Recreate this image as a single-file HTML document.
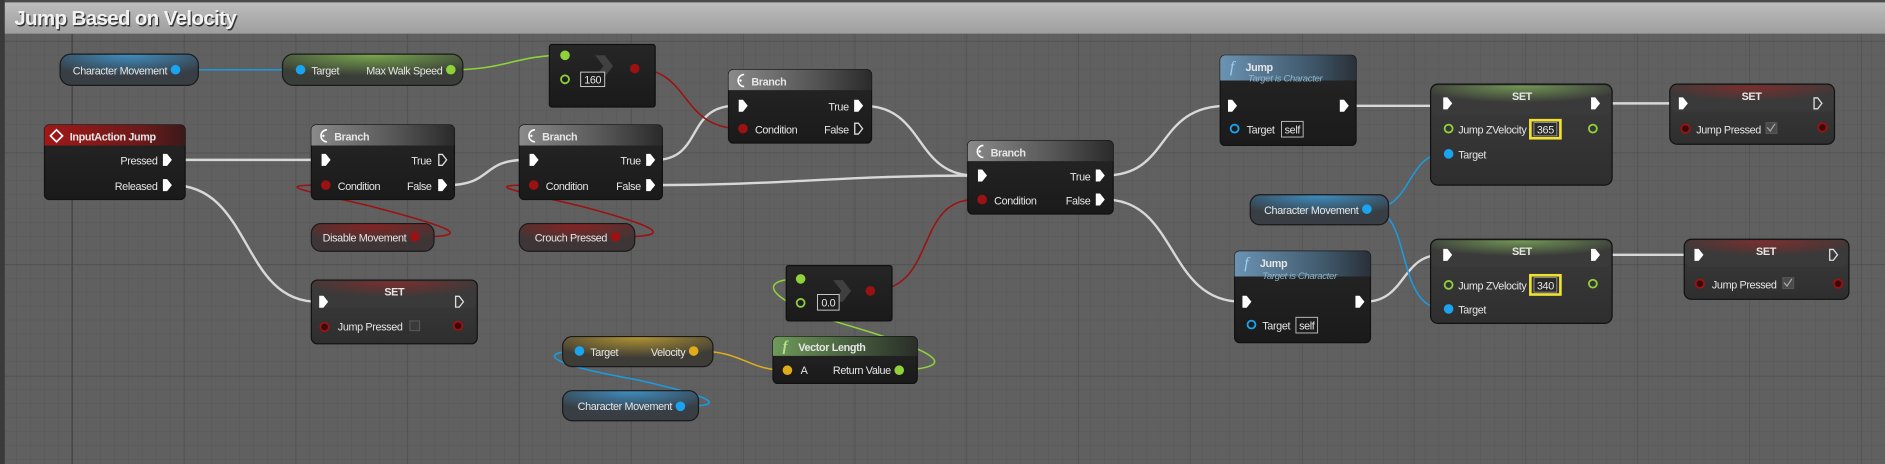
<!DOCTYPE html>
<html><head><meta charset="utf-8"><style>
html,body{margin:0;padding:0;background:#5e5e5e;overflow:hidden}
svg{display:block}
text{font-family:"Liberation Sans Narrow","Liberation Sans",sans-serif;font-size:9px;letter-spacing:-0.3px;fill:#e6e6e6}
.b{font-weight:bold}
.e{text-anchor:end}
.m{text-anchor:middle}
</style></head><body>
<svg width="1885" height="464" viewBox="0 0 1568 386" preserveAspectRatio="none" xmlns="http://www.w3.org/2000/svg">
<defs>
<pattern id="minor" width="11.6" height="11.6" patternUnits="userSpaceOnUse" x="60" y="34">
<path d="M0 0H11.6M0 0V11.6" stroke="#585858" stroke-width="0.8" fill="none"/>
</pattern>
<pattern id="major" width="93" height="93" patternUnits="userSpaceOnUse" x="60" y="34">
<path d="M0 0H93M0 0V93" stroke="#4d4d4d" stroke-width="1" fill="none"/>
</pattern>
<linearGradient id="title" x1="0" y1="0" x2="0" y2="1"><stop offset="0" stop-color="#bdbdbd"/><stop offset="1" stop-color="#9e9e9e"/></linearGradient>
<linearGradient id="hGrey" x1="0" y1="0" x2="1" y2="0"><stop offset="0" stop-color="#8a8a8a"/><stop offset="0.6" stop-color="#555"/><stop offset="1" stop-color="#2a2a2a"/></linearGradient>
<linearGradient id="hRed" x1="0" y1="0" x2="1" y2="0"><stop offset="0" stop-color="#a01818"/><stop offset="0.7" stop-color="#6a1a1a"/><stop offset="1" stop-color="#3a1a1a"/></linearGradient>
<linearGradient id="hBlue" x1="0" y1="0" x2="1" y2="0"><stop offset="0" stop-color="#6b93b3"/><stop offset="0.7" stop-color="#3d5466"/><stop offset="1" stop-color="#2a3038"/></linearGradient>
<linearGradient id="hGreen" x1="0" y1="0" x2="1" y2="0"><stop offset="0" stop-color="#6e9a5a"/><stop offset="0.7" stop-color="#3c4d36"/><stop offset="1" stop-color="#2a2e28"/></linearGradient>
<radialGradient id="setG" cx="0.5" cy="0" r="0.6"><stop offset="0" stop-color="#7da95a"/><stop offset="1" stop-color="#3a3a3a"/></radialGradient>
<radialGradient id="setR" cx="0.5" cy="0" r="0.6"><stop offset="0" stop-color="#8c2a2a"/><stop offset="1" stop-color="#3a3a3a"/></radialGradient>
<radialGradient id="pBlue" cx="0.5" cy="0" r="0.7"><stop offset="0" stop-color="#3e8fc4"/><stop offset="1" stop-color="#383e44"/></radialGradient>
<radialGradient id="pGreen" cx="0.5" cy="0" r="0.7"><stop offset="0" stop-color="#7aa84e"/><stop offset="1" stop-color="#3a3e38"/></radialGradient>
<radialGradient id="pRed" cx="0.5" cy="0" r="0.7"><stop offset="0" stop-color="#8a2222"/><stop offset="1" stop-color="#3e3636"/></radialGradient>
<radialGradient id="pOr" cx="0.5" cy="0" r="0.7"><stop offset="0" stop-color="#b39433"/><stop offset="1" stop-color="#3e3c36"/></radialGradient>
<linearGradient id="body" x1="0" y1="0" x2="0" y2="1"><stop offset="0" stop-color="#262626"/><stop offset="1" stop-color="#1a1a1a"/></linearGradient>
<linearGradient id="body2" x1="0" y1="0" x2="0" y2="1"><stop offset="0" stop-color="#3c3c3c"/><stop offset="1" stop-color="#2e2e2e"/></linearGradient>
<path id="ex" d="M-3.5,-5 h3.5 l4,5 l-4,5 h-3.5 z"/>
<path id="exo" d="M-3,-4.5 h3 l3.5,4.5 l-3.5,4.5 h-3 z" fill="none" stroke="#ddd" stroke-width="1.1"/>
</defs>
<rect width="1568" height="386" fill="#606060"/>
<rect width="1568" height="386" fill="url(#minor)"/>
<rect width="1568" height="386" fill="url(#major)"/>
<line x1="60" y1="28" x2="60" y2="386" stroke="#454545" stroke-width="1.2"/>
<rect x="0" y="0" width="4" height="386" fill="#3a3a3a"/>
<rect x="4" y="0" width="1564" height="2" fill="#4a4a4a"/>
<rect x="4" y="2" width="1564" height="26" fill="url(#title)"/>
<text x="13" y="22" class="b" style="font-family:'Liberation Sans',sans-serif;font-size:17px;letter-spacing:-0.5px;fill:#333">Jump Based on Velocity</text>
<text x="12" y="21" class="b" style="font-family:'Liberation Sans',sans-serif;font-size:17px;letter-spacing:-0.5px;fill:#f2f2f2">Jump Based on Velocity</text>

<!-- wires -->
<g fill="none" stroke-width="2" stroke="#d8d8d8">
<path d="M143,133 H264"/>
<path d="M143,154 C210,154 200,251 264,251"/>
<path d="M372,154 C410,154 400,133 437,133"/>
<path d="M545,133 C585,133 570,88 612,88"/>
<path d="M545,154 C650,154 700,146 811,146"/>
<path d="M718,88 C770,88 760,146 811,146"/>
<path d="M919,146 C975,146 960,88 1021,88"/>
<path d="M919,166 C980,166 970,251 1033,251"/>
<path d="M1122,88 H1199"/>
<path d="M1332,86 H1396"/>
<path d="M1135,251 C1170,251 1165,212 1199,212"/>
<path d="M1332,212 H1408"/>
</g>
<g fill="none" stroke-width="1.3" stroke="#9c1212">
<path d="M528,57 C575,57 565,107 616,107"/>
<path d="M724,242 C780,242 760,166 811,166"/>
<path d="M347,197 C400,197 370,188 310,172 C260,160 225,154 264,154"/>
<path d="M515,197 C565,197 545,188 485,172 C435,160 400,154 437,154"/>
</g>
<g fill="none" stroke-width="1.3" stroke="#1a9be0">
<path d="M148,58 H248"/>
<path d="M1140,174 C1175,174 1170,128 1201,128"/>
<path d="M1140,174 C1175,174 1160,257 1201,257"/>
<path d="M567,338 C620,338 570,325 530,316 C440,300 455,292 482,292"/>
</g>
<g fill="none" stroke-width="1.3" stroke="#8fd13b">
<path d="M377,58 C420,58 430,46 468,46"/>
<path d="M750,308 C805,305 770,290 710,272 C640,252 625,232 666,232"/>
</g>
<path d="M579,292 C620,292 620,308 655,308" fill="none" stroke="#e0ad1a" stroke-width="1.3"/>

<!-- pill: Character Movement top -->
<rect x="50" y="45" width="115" height="26" rx="9" fill="url(#pBlue)" stroke="#1a1a1a"/>
<text x="139" y="62" class="e">Character Movement</text>
<circle cx="146" cy="58" r="4" fill="#1aa3ef"/>
<!-- Target / Max walk speed -->
<rect x="235" y="45" width="150" height="26" rx="9" fill="url(#pGreen)" stroke="#1a1a1a"/>
<circle cx="250" cy="58" r="4" fill="#1aa3ef"/><text x="259" y="62">Target</text>
<text x="368" y="62" class="e">Max Walk Speed</text><circle cx="375" cy="58" r="4" fill="#8fd13b"/>
<!-- compare 1 -->
<rect x="457" y="37" width="88" height="52" rx="2" fill="url(#body)" stroke="#111"/>
<circle cx="470" cy="46" r="4" fill="#8fd13b"/>
<circle cx="470" cy="66" r="3.3" fill="none" stroke="#8fd13b" stroke-width="1.5"/>
<path d="M495,46 l8,0 l7,9 l-7,9 l-8,0 l7,-9z" fill="#555" opacity="0.6"/>
<rect x="483" y="60" width="20" height="12" fill="#1e1e1e" stroke="#ccc" stroke-width="0.8"/><text x="493" y="69.5" class="m">160</text>
<circle cx="528" cy="57" r="4" fill="#9c1212"/>

<!-- InputAction Jump -->
<rect x="37" y="104" width="117" height="62" rx="4" fill="url(#body)" stroke="#111"/>
<path d="M41,104 h109 a4,4 0 0 1 4,4 v13 h-117 v-13 a4,4 0 0 1 4,-4z" fill="url(#hRed)"/>
<path d="M47,108 l5,5 l-5,5 l-5,-5z" fill="none" stroke="#fff" stroke-width="1.4"/>
<text x="58" y="117" class="b">InputAction Jump</text>
<text x="131" y="137" class="e">Pressed</text><use href="#ex" x="139" y="133" fill="#fff"/>
<text x="131" y="158" class="e">Released</text><use href="#ex" x="139" y="154" fill="#fff"/>

<g transform="translate(259,104)">
<rect x="0" y="0" width="119" height="62" rx="4" fill="url(#body)" stroke="#111"/>
<path d="M4,0 h111 a4,4 0 0 1 4,4 v13 h-119 v-13 a4,4 0 0 1 4,-4z" fill="url(#hGrey)"/>
<path d="M13,4 a5,5 0 0 0 0,10" fill="none" stroke="#fff" stroke-width="1.3"/><circle cx="10" cy="9" r="1" fill="#fff"/>
<text x="19" y="13" class="b">Branch</text>
<use href="#ex" x="12" y="29" fill="#fff"/>
<circle cx="12" cy="50" r="4" fill="#9c1212"/><text x="22" y="54">Condition</text>
<text x="100" y="33" class="e">True</text><use href="#exo" x="109" y="29"/>
<text x="100" y="54" class="e">False</text><use href="#ex" x="109" y="50" fill="#fff"/>
</g>

<g transform="translate(432,104)">
<rect x="0" y="0" width="119" height="62" rx="4" fill="url(#body)" stroke="#111"/>
<path d="M4,0 h111 a4,4 0 0 1 4,4 v13 h-119 v-13 a4,4 0 0 1 4,-4z" fill="url(#hGrey)"/>
<path d="M13,4 a5,5 0 0 0 0,10" fill="none" stroke="#fff" stroke-width="1.3"/><circle cx="10" cy="9" r="1" fill="#fff"/>
<text x="19" y="13" class="b">Branch</text>
<use href="#ex" x="12" y="29" fill="#fff"/>
<circle cx="12" cy="50" r="4" fill="#9c1212"/><text x="22" y="54">Condition</text>
<text x="101" y="33" class="e">True</text><use href="#ex" x="109" y="29" fill="#fff"/>
<text x="101" y="54" class="e">False</text><use href="#ex" x="109" y="50" fill="#fff"/>
</g>

<g transform="translate(606,58)">
<rect x="0" y="0" width="119" height="61" rx="4" fill="url(#body)" stroke="#111"/>
<path d="M4,0 h111 a4,4 0 0 1 4,4 v13 h-119 v-13 a4,4 0 0 1 4,-4z" fill="url(#hGrey)"/>
<path d="M13,4 a5,5 0 0 0 0,10" fill="none" stroke="#fff" stroke-width="1.3"/><circle cx="10" cy="9" r="1" fill="#fff"/>
<text x="19" y="13" class="b">Branch</text>
<use href="#ex" x="12" y="30" fill="#fff"/>
<circle cx="12" cy="49" r="4" fill="#9c1212"/><text x="22" y="53">Condition</text>
<text x="100" y="34" class="e">True</text><use href="#ex" x="108" y="30" fill="#fff"/>
<text x="100" y="53" class="e">False</text><use href="#exo" x="108" y="49"/>
</g>

<g transform="translate(805,117)">
<rect x="0" y="0" width="121" height="61" rx="4" fill="url(#body)" stroke="#111"/>
<path d="M4,0 h113 a4,4 0 0 1 4,4 v13 h-121 v-13 a4,4 0 0 1 4,-4z" fill="url(#hGrey)"/>
<path d="M13,4 a5,5 0 0 0 0,10" fill="none" stroke="#fff" stroke-width="1.3"/><circle cx="10" cy="9" r="1" fill="#fff"/>
<text x="19" y="13" class="b">Branch</text>
<use href="#ex" x="12" y="29" fill="#fff"/>
<circle cx="12" cy="49" r="4" fill="#9c1212"/><text x="22" y="53">Condition</text>
<text x="102" y="33" class="e">True</text><use href="#ex" x="110" y="29" fill="#fff"/>
<text x="102" y="53" class="e">False</text><use href="#ex" x="110" y="49" fill="#fff"/>
</g>

<!-- Disable / Crouch pills -->
<rect x="259" y="186" width="102" height="23" rx="8" fill="url(#pRed)" stroke="#1a1a1a"/>
<text x="338" y="201" class="e">Disable Movement</text><circle cx="345" cy="197" r="4" fill="#9c1212"/>
<rect x="432" y="186" width="96" height="23" rx="8" fill="url(#pRed)" stroke="#1a1a1a"/>
<text x="505" y="201" class="e">Crouch Pressed</text><circle cx="512" cy="197" r="4" fill="#9c1212"/>

<!-- SET jump pressed (bottom left) -->
<rect x="259" y="233" width="138" height="53" rx="5" fill="url(#body2)" stroke="#111"/>
<rect x="260" y="234" width="136" height="22" rx="4" fill="url(#setR)" opacity="0.8"/>
<text x="328" y="246" class="b m">SET</text>
<use href="#ex" x="269" y="251" fill="#fff"/><use href="#exo" x="382" y="251"/>
<circle cx="270" cy="272" r="3.5" fill="#3a0a0a" stroke="#9c1212" stroke-width="1.5"/>
<text x="281" y="275">Jump Pressed</text>
<rect x="341" y="267" width="8" height="8" fill="#3a3a3a" stroke="#555"/>
<circle cx="381" cy="271" r="3.5" fill="#3a0a0a" stroke="#9c1212" stroke-width="1.5"/>

<!-- compare 2 -->
<rect x="654" y="221" width="88" height="46" rx="2" fill="url(#body)" stroke="#111"/>
<circle cx="666" cy="232" r="4" fill="#8fd13b"/>
<circle cx="666" cy="252" r="3.3" fill="none" stroke="#8fd13b" stroke-width="1.5"/>
<path d="M693,233 l8,0 l7,9 l-7,9 l-8,0 l7,-9z" fill="#555" opacity="0.6"/>
<rect x="680" y="245" width="18" height="13" fill="#1e1e1e" stroke="#ccc" stroke-width="0.8"/><text x="689" y="255" class="m">0.0</text>
<circle cx="724" cy="242" r="4" fill="#9c1212"/>

<!-- Vector Length -->
<rect x="643" y="280" width="120" height="39" rx="4" fill="url(#body)" stroke="#111"/>
<path d="M647,280 h112 a4,4 0 0 1 4,4 v12 h-120 v-12 a4,4 0 0 1 4,-4z" fill="url(#hGreen)"/>
<text x="651" y="292" class="b" style="font-family:'Liberation Serif',serif;font-style:italic;font-size:12px;fill:#b7e08f">f</text>
<text x="664" y="292" class="b">Vector Length</text>
<circle cx="655" cy="308" r="4" fill="#e0ad1a"/><text x="666" y="311">A</text>
<text x="741" y="311" class="e">Return Value</text><circle cx="748" cy="308" r="4" fill="#8fd13b"/>

<!-- Target/Velocity pill -->
<rect x="468" y="280" width="125" height="25" rx="8" fill="url(#pOr)" stroke="#1a1a1a"/>
<circle cx="482" cy="292" r="4" fill="#1aa3ef"/><text x="491" y="296">Target</text>
<text x="570" y="296" class="e">Velocity</text><circle cx="577" cy="292" r="4" fill="#e0ad1a"/>
<!-- CharMovement bottom -->
<rect x="468" y="325" width="113" height="25" rx="8" fill="url(#pBlue)" stroke="#1a1a1a"/>
<text x="559" y="341" class="e">Character Movement</text><circle cx="566" cy="338" r="4" fill="#1aa3ef"/>

<!-- Jump 1 -->
<rect x="1015" y="46" width="113" height="75" rx="4" fill="url(#body)" stroke="#111"/>
<path d="M1019,46 h105 a4,4 0 0 1 4,4 v17 h-113 v-17 a4,4 0 0 1 4,-4z" fill="url(#hBlue)"/>
<text x="1023" y="60" style="font-family:'Liberation Serif',serif;font-style:italic;font-size:13px;fill:#9cd0f5">f</text>
<text x="1036" y="59" class="b">Jump</text>
<text x="1038" y="68" style="font-style:italic;font-size:8px;fill:#8fb5c9">Target is Character</text>
<use href="#ex" x="1025" y="88" fill="#fff"/><use href="#ex" x="1118" y="88" fill="#fff"/>
<circle cx="1027" cy="107" r="3.3" fill="none" stroke="#1aa3ef" stroke-width="1.5"/>
<text x="1037" y="111">Target</text>
<rect x="1066" y="101" width="18" height="13" fill="none" stroke="#bbb" stroke-width="0.8"/><text x="1075" y="111" class="m">self</text>

<!-- Jump 2 -->
<rect x="1027" y="209" width="113" height="76" rx="4" fill="url(#body)" stroke="#111"/>
<path d="M1031,209 h105 a4,4 0 0 1 4,4 v17 h-113 v-17 a4,4 0 0 1 4,-4z" fill="url(#hBlue)"/>
<text x="1035" y="223" style="font-family:'Liberation Serif',serif;font-style:italic;font-size:13px;fill:#9cd0f5">f</text>
<text x="1048" y="222" class="b">Jump</text>
<text x="1050" y="232" style="font-style:italic;font-size:8px;fill:#8fb5c9">Target is Character</text>
<use href="#ex" x="1037" y="251" fill="#fff"/><use href="#ex" x="1131" y="251" fill="#fff"/>
<circle cx="1041" cy="270" r="3.3" fill="none" stroke="#1aa3ef" stroke-width="1.5"/>
<text x="1050" y="274">Target</text>
<rect x="1078" y="264" width="18" height="13" fill="none" stroke="#bbb" stroke-width="0.8"/><text x="1087" y="274" class="m">self</text>

<!-- CharMovement right -->
<rect x="1040" y="162" width="115" height="25" rx="8" fill="url(#pBlue)" stroke="#1a1a1a"/>
<text x="1130" y="178" class="e">Character Movement</text><circle cx="1137" cy="174" r="4" fill="#1aa3ef"/>

<!-- SET 365 -->
<rect x="1190" y="70" width="151" height="84" rx="6" fill="url(#body2)" stroke="#111"/>
<rect x="1191" y="71" width="149" height="24" rx="5" fill="url(#setG)" opacity="0.85"/>
<text x="1266" y="83" class="b m">SET</text>
<use href="#ex" x="1204" y="86" fill="#fff"/><use href="#ex" x="1327" y="86" fill="#fff"/>
<circle cx="1205" cy="107" r="3.3" fill="none" stroke="#8fd13b" stroke-width="1.5"/>
<text x="1213" y="111">Jump ZVelocity</text>
<rect x="1273" y="100" width="25" height="15" fill="none" stroke="#f0e130" stroke-width="2.2"/>
<rect x="1276" y="102" width="19" height="11" fill="#2a2a2a" stroke="#aaa" stroke-width="0.6"/>
<text x="1285.5" y="111" class="m">365</text>
<circle cx="1325" cy="107" r="3.3" fill="none" stroke="#8fd13b" stroke-width="1.5"/>
<circle cx="1205" cy="128" r="4" fill="#1aa3ef"/><text x="1213" y="132">Target</text>

<!-- SET 340 -->
<rect x="1190" y="199" width="151" height="70" rx="6" fill="url(#body2)" stroke="#111"/>
<rect x="1191" y="200" width="149" height="22" rx="5" fill="url(#setG)" opacity="0.85"/>
<text x="1266" y="212" class="b m">SET</text>
<use href="#ex" x="1204" y="212" fill="#fff"/><use href="#ex" x="1327" y="212" fill="#fff"/>
<circle cx="1205" cy="237" r="3.3" fill="none" stroke="#8fd13b" stroke-width="1.5"/>
<text x="1213" y="241">Jump ZVelocity</text>
<rect x="1273" y="229" width="25" height="16" fill="none" stroke="#f0e130" stroke-width="2.2"/>
<rect x="1276" y="231" width="19" height="12" fill="#2a2a2a" stroke="#aaa" stroke-width="0.6"/>
<text x="1285.5" y="241" class="m">340</text>
<circle cx="1325" cy="236" r="3.3" fill="none" stroke="#8fd13b" stroke-width="1.5"/>
<circle cx="1205" cy="257" r="4" fill="#1aa3ef"/><text x="1213" y="261">Target</text>

<!-- SET red 1 -->
<rect x="1389" y="70" width="137" height="50" rx="6" fill="url(#body2)" stroke="#111"/>
<rect x="1390" y="71" width="135" height="22" rx="5" fill="url(#setR)" opacity="0.85"/>
<text x="1457" y="83" class="b m">SET</text>
<use href="#ex" x="1400" y="86" fill="#fff"/><use href="#exo" x="1512" y="86"/>
<circle cx="1402" cy="107" r="3.5" fill="#3a0a0a" stroke="#9c1212" stroke-width="1.5"/>
<text x="1411" y="111">Jump Pressed</text>
<rect x="1469" y="102" width="9" height="9" fill="#4a4a4a" stroke="#555"/><path d="M1470,106 l2.5,3 l4,-6" stroke="#aaa" fill="none" stroke-width="1"/>
<circle cx="1516" cy="106" r="3.5" fill="#3a0a0a" stroke="#9c1212" stroke-width="1.5"/>

<!-- SET red 2 -->
<rect x="1401" y="199" width="137" height="50" rx="6" fill="url(#body2)" stroke="#111"/>
<rect x="1402" y="200" width="135" height="22" rx="5" fill="url(#setR)" opacity="0.85"/>
<text x="1469" y="212" class="b m">SET</text>
<use href="#ex" x="1413" y="212" fill="#fff"/><use href="#exo" x="1525" y="212"/>
<circle cx="1414" cy="236" r="3.5" fill="#3a0a0a" stroke="#9c1212" stroke-width="1.5"/>
<text x="1424" y="240">Jump Pressed</text>
<rect x="1483" y="231" width="9" height="9" fill="#4a4a4a" stroke="#555"/><path d="M1484,235 l2.5,3 l4,-6" stroke="#aaa" fill="none" stroke-width="1"/>
<circle cx="1529" cy="236" r="3.5" fill="#3a0a0a" stroke="#9c1212" stroke-width="1.5"/>
</svg>
</body></html>
